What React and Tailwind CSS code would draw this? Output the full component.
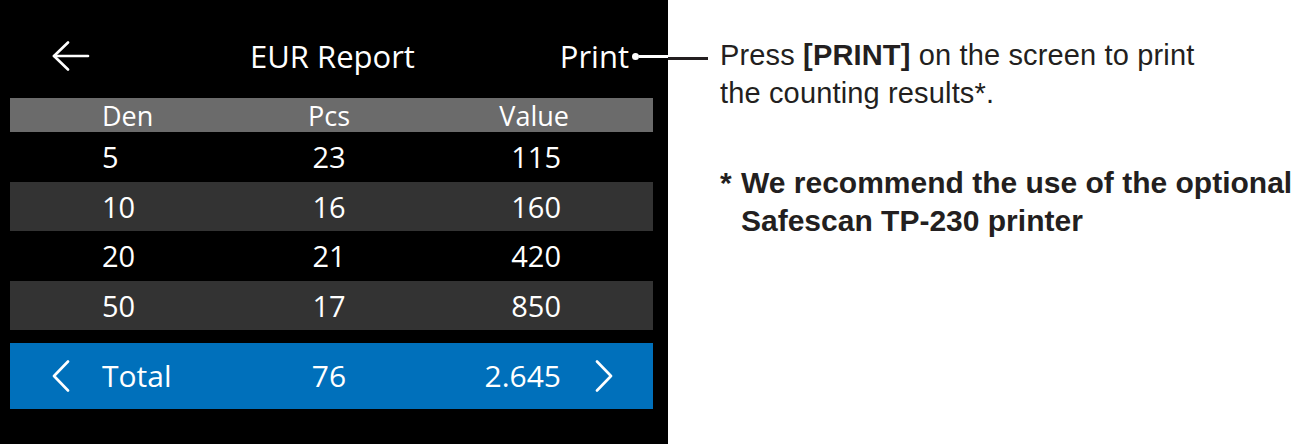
import { useState } from 'react'

// EUR report screen with a printing note beside it

const rows = [
  { den: '5', pcs: '23', value: '115' },
  { den: '10', pcs: '16', value: '160' },
  { den: '20', pcs: '21', value: '420' },
  { den: '50', pcs: '17', value: '850' },
]

function ArrowLeft() {
  return (
    <svg width="38" height="30" viewBox="0 0 38 30" fill="none" stroke="white" strokeWidth="2.6" strokeLinecap="round" strokeLinejoin="round">
      <path d="M2 15 H36" />
      <path d="M16 1.5 L2 15 L16 28.5" />
    </svg>
  )
}

function Chevron({ dir }) {
  return (
    <svg width="20" height="32" viewBox="0 0 20 32" fill="none" stroke="white" strokeWidth="2.6" strokeLinecap="round" strokeLinejoin="round">
      {dir === 'left' ? <path d="M17 1.5 L3 16 L17 30.5" /> : <path d="M3 1.5 L17 16 L3 30.5" />}
    </svg>
  )
}

export default function App() {
  const [page] = useState(0)

  return (
    <div className="flex h-[444px] w-[1293px] overflow-hidden">
      {/* Device screen */}
      <div className="flex w-[668px] flex-col bg-black text-white" style={{ fontFamily: '"Open Sans", sans-serif' }} data-page={page}>
        <div className="flex h-[98px] items-center pt-[14px]">
          <div className="w-[250px] pl-[52px]">
            <ArrowLeft />
          </div>
          <div className="text-[31px] leading-none">EUR Report</div>
          <div className="flex flex-1 items-center justify-end">
            <span className="text-[31px] leading-none">Print</span>
            <span className="ml-[3px] h-[7px] w-[7px] rounded-full bg-white" />
            <span className="h-[3px] w-[29px] bg-white" />
          </div>
        </div>

        <div className="ml-[10px] mr-[15px] flex flex-col">
          <div className="flex h-[34px] items-center bg-[#6b6b6b] text-[27px] leading-none">
            <div className="w-[290px] pl-[92px]">Den</div>
            <div className="w-[58px] text-center">Pcs</div>
            <div className="w-[211px] text-right">Value</div>
          </div>
          {rows.map((r, i) => (
            <div
              key={r.den}
              className={`flex h-[49.5px] items-center text-[29px] leading-none ${i % 2 === 1 ? 'bg-[#333333]' : 'bg-black'}`}
            >
              <div className="w-[290px] pl-[92px]">{r.den}</div>
              <div className="w-[58px] text-center">{r.pcs}</div>
              <div className="w-[203px] text-right">{r.value}</div>
            </div>
          ))}

          <div className="mt-[13px] flex h-[66px] items-center bg-[#0070bb] text-[30px] leading-none">
            <div className="w-[92px] pl-[41px]">
              <Chevron dir="left" />
            </div>
            <div className="w-[198px]">Total</div>
            <div className="w-[58px] text-center">76</div>
            <div className="w-[203px] text-right">2.645</div>
            <div className="pl-[33px]">
              <Chevron dir="right" />
            </div>
          </div>
        </div>
      </div>

      {/* Annotation */}
      <div className="flex-1 bg-white pt-[36px] text-[#231f20]" style={{ fontFamily: '"Liberation Sans", Arial, sans-serif' }}>
        <div className="flex items-start">
          <span className="mt-[21px] h-[3px] w-[40px] bg-[#231f20]" />
          <p className="ml-[12px] text-[29px] leading-[38px] tracking-[0.15px]">
            Press <b className="font-bold">[PRINT]</b> on the screen to print
            <br />
            the counting results*.
          </p>
        </div>
        <div className="mt-[52px] flex pl-[52px] text-[30px] font-bold leading-[38px]">
          <span className="w-[21px] shrink-0">*</span>
          <p>
            We recommend the use of the optional
            <br />
            Safescan TP-230 printer
          </p>
        </div>
      </div>
    </div>
  )
}
